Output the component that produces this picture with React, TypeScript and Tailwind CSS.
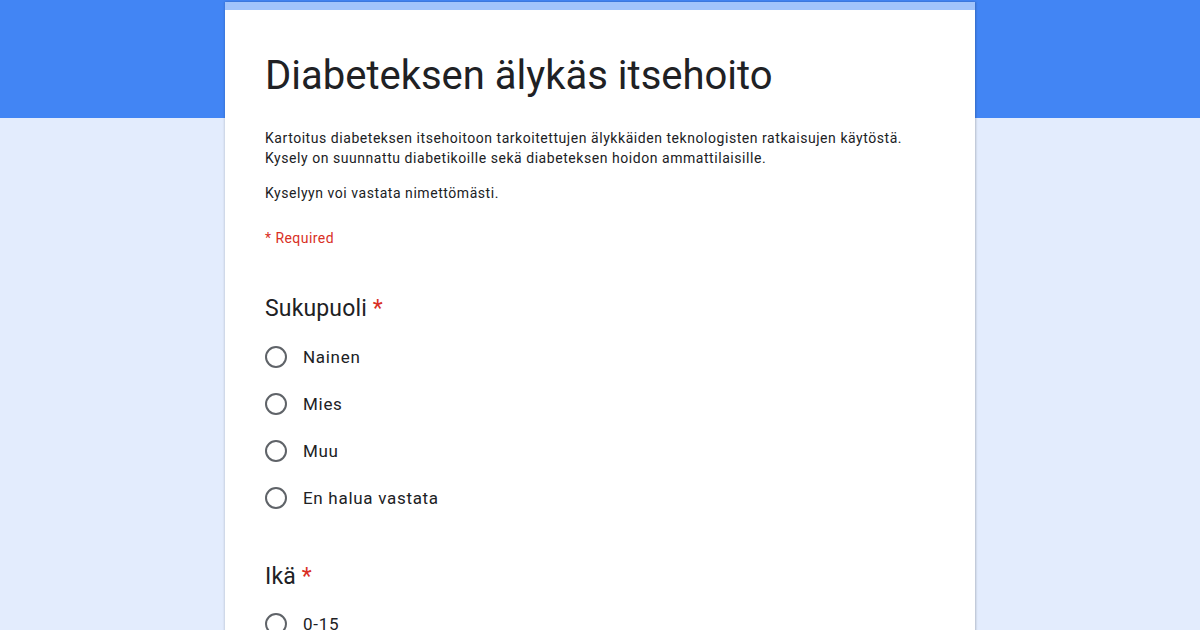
import React from "react";

function Radio({ label }: { label: string }) {
  return (
    <div className="flex h-[47px] items-center">
      <span className="box-border h-[22px] w-[22px] rounded-full border-2 border-[#5f6368]" />
      <span className="ml-[16px] text-[17px] leading-[24px] tracking-[0.7px] text-[#202124]">{label}</span>
    </div>
  );
}

export default function App() {
  return (
    <div
      className="h-[630px] w-full overflow-hidden bg-[linear-gradient(#4285f4_0,#4285f4_118px,#e3ecfd_118px,#e3ecfd_100%)] pt-[2px]"
      style={{ fontFamily: "Roboto, 'Liberation Sans', sans-serif" }}
    >
      <div className="mx-auto h-[700px] w-[750px] border-t-[8px] border-[#a1c4fb] bg-white px-[40px] pt-[42px] shadow-[1px_0_2px_rgba(0,0,0,0.2),-1px_0_2px_rgba(0,0,0,0.1)]">
        <h1 className="text-[40px] leading-[48px] text-[#202124]">Diabeteksen älykäs itsehoito</h1>
        <div className="mt-[28px] text-[14px] leading-[20px] tracking-[0.55px] text-[#202124]">
          <p>
            Kartoitus diabeteksen itsehoitoon tarkoitettujen älykkäiden teknologisten ratkaisujen käytöstä.
            <br />
            Kysely on suunnattu diabetikoille sekä diabeteksen hoidon ammattilaisille.
          </p>
          <p className="mt-[15px]">Kyselyyn voi vastata nimettömästi.</p>
        </div>
        <div className="mt-[25px] text-[14px] leading-[20px] tracking-[0.45px] text-[#d93025]">* Required</div>

        <div className="mt-[47px] text-[23px] leading-[28px] tracking-[0.15px] text-[#202124]">
          Sukupuoli <span className="text-[#d93025]">*</span>
        </div>
        <div className="mt-[10px]">
          <Radio label="Nainen" />
          <Radio label="Mies" />
          <Radio label="Muu" />
          <Radio label="En halua vastata" />
        </div>

        <div className="mt-[42px] text-[23px] leading-[28px] tracking-[0.15px] text-[#202124]">
          Ikä <span className="text-[#d93025]">*</span>
        </div>
        <div className="mt-[9px]">
          <Radio label="0-15" />
        </div>
      </div>
    </div>
  );
}
